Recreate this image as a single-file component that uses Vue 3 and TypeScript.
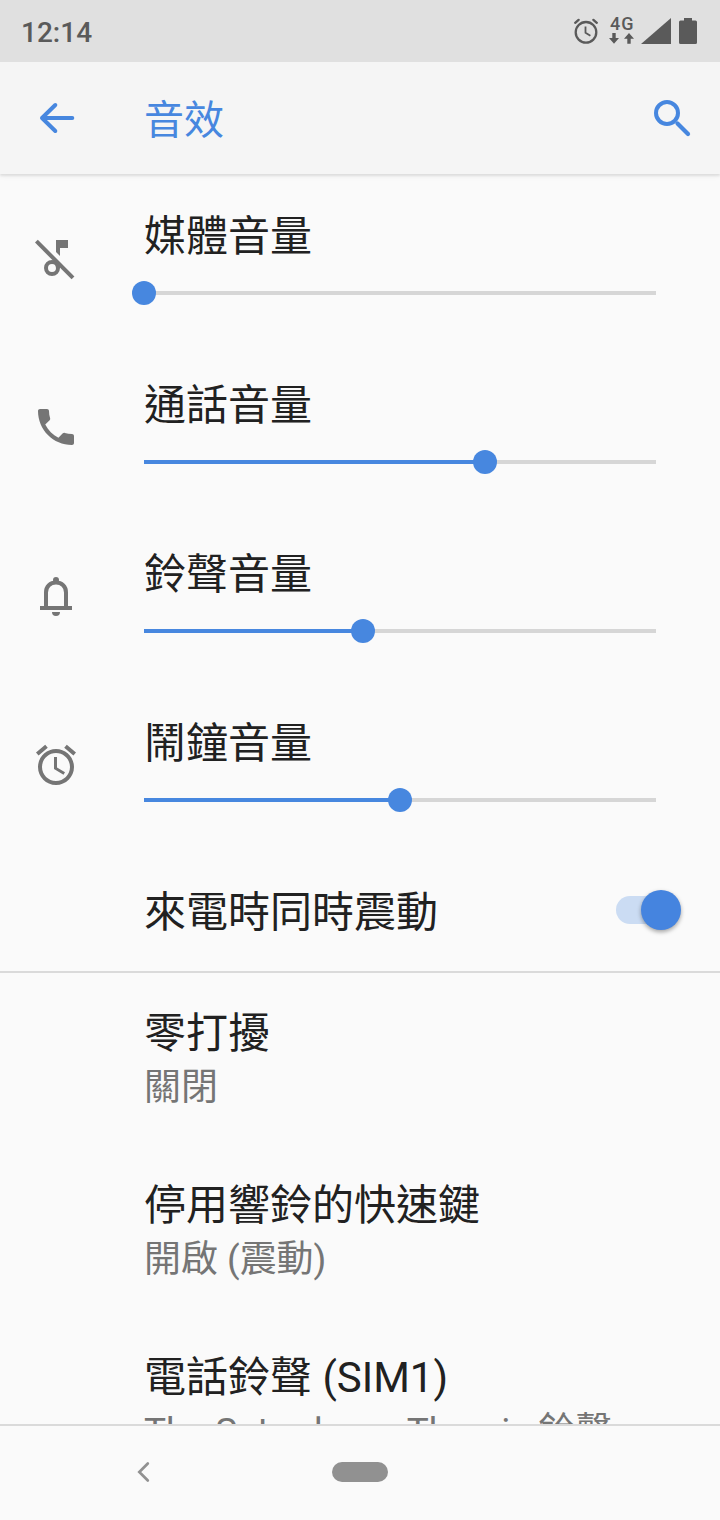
<script setup lang="ts">
type IconName = 'musicOff' | 'phone' | 'bell' | 'alarm'

interface Volume {
  icon: IconName
  label: string
  percent: number
}

interface Setting {
  title: string
  summary: string
}

const volumes: Volume[] = [
  { icon: 'musicOff', label: '媒體音量', percent: 0 },
  { icon: 'phone', label: '通話音量', percent: 66.65 },
  { icon: 'bell', label: '鈴聲音量', percent: 42.8 },
  { icon: 'alarm', label: '鬧鐘音量', percent: 50 },
]

const settings: Setting[] = [
  { title: '零打擾', summary: '關閉' },
  { title: '停用響鈴的快速鍵', summary: '開啟 (震動)' },
  { title: '電話鈴聲 (SIM1)', summary: 'The Saturdays - Themis 鈴聲' },
]

const alarmPath =
  'M22 5.72l-4.6-3.86-1.29 1.53 4.6 3.86L22 5.72zM7.88 3.39L6.6 1.86 2 5.71l1.29 1.53 4.59-3.85zM12.5 8H11v6l4.75 2.85.75-1.23-4-2.37V8zM12 4c-4.97 0-9 4.03-9 9s4.02 9 9 9c4.97 0 9-4.03 9-9s-4.03-9-9-9zm0 16c-3.87 0-7-3.13-7-7s3.13-7 7-7 7 3.13 7 7-3.13 7-7 7z'
</script>

<template>
  <div class="screen">
    <header class="status">
      <span class="clock">12:14</span>
      <div class="status-icons">
        <svg class="st-alarm" viewBox="0 0 26 28">
          <circle cx="13" cy="15.3" r="10.3" fill="none" stroke="#5a5a5a" stroke-width="2.300" />
          <path d="M2.200 5.800 5.600 2.900M23.800 5.800 20.400 2.900" stroke="#5a5a5a" stroke-width="2.400" stroke-linecap="round" />
          <path d="M12.500 9.500v6.200l4.900 3" fill="none" stroke="#5a5a5a" stroke-width="1.800" />
        </svg>
        <div class="network">
          <span class="network-label">4G</span>
          <svg class="arrows" viewBox="0 0 26 11">
            <path d="M4.300 0h3.400v5H11L6 10.800 1 5h3.300zM19.300 10.800h3.400v-5H26L21 0l-5 5.800h3.300z" fill="#5a5a5a" />
          </svg>
        </div>
        <svg class="signal" viewBox="0 0 30 26"><path d="M30 0v26H0z" fill="#5a5a5a" /></svg>
        <svg class="battery" viewBox="0 0 18 26">
          <path d="M5 0h8v2.500h3.500Q18 2.500 18 4v20.500Q18 26 16.500 26h-15Q0 26 0 24.500V4Q0 2.500 1.500 2.500H5z" fill="#5a5a5a" />
        </svg>
      </div>
    </header>

    <div class="appbar">
      <svg class="back" viewBox="0 0 40 40">
        <path d="M36.300 20H6M19.300 7 6 20l13.300 13" fill="none" stroke="#4787df" stroke-width="4" stroke-linecap="round" stroke-linejoin="round" />
      </svg>
      <h1>音效</h1>
      <svg class="search" viewBox="0 0 40 40">
        <circle cx="15" cy="15" r="11" fill="none" stroke="#4787df" stroke-width="4" />
        <path d="M25.500 25.500l10.500 10.500" stroke="#4787df" stroke-width="4.200" stroke-linecap="round" />
      </svg>
    </div>

    <main class="list">
      <section v-for="v in volumes" :key="v.label" class="volume">
        <div class="icon-cell">
          <svg class="icon" viewBox="0 0 24 24">
            <template v-if="v.icon === 'musicOff'">
              <circle cx="10" cy="17" r="3" fill="none" stroke="#757575" stroke-width="2" />
              <path d="M12 3h6v4h-4v4l-2-2zM11.500 12.800l2.500 2.500V17h-2z" fill="#757575" />
              <path d="M2.200 3.600 20.500 21.900" stroke="#757575" stroke-width="2" />
            </template>
            <path v-else-if="v.icon === 'phone'" fill="#757575" d="M6.620 10.790c1.440 2.830 3.760 5.140 6.590 6.590l2.200-2.200c.27-.27.67-.36 1.020-.24 1.120.37 2.330.57 3.570.57.55 0 1 .45 1 1V20c0 .55-.45 1-1 1-9.390 0-17-7.610-17-17 0-.55.45-1 1-1h3.500c.55 0 1 .45 1 1 0 1.250.2 2.450.57 3.570.11.35.03.74-.25 1.020l-2.200 2.200z" />
            <template v-else-if="v.icon === 'bell'">
              <circle cx="12" cy="4" r="1.500" fill="#757575" />
              <path d="M7 17.500v-7.300C7 7.200 9.100 5.300 12 5.300s5 1.900 5 4.900v7.300" fill="none" stroke="#757575" stroke-width="2" />
              <path d="M4 17h16v2H4zM10 20h4a2 2 0 0 1-4 0z" fill="#757575" />
            </template>
            <path v-else :d="alarmPath" fill="#757575" />
          </svg>
        </div>
        <div class="volume-body">
          <div class="title">{{ v.label }}</div>
          <div class="slider">
            <div class="fill" :style="{ width: v.percent + '%' }"></div>
            <div class="thumb" :style="{ left: v.percent + '%' }"></div>
          </div>
        </div>
      </section>

      <section class="vibrate">
        <div class="title">來電時同時震動</div>
        <div class="switch"><div class="knob"></div></div>
      </section>

      <section v-for="s in settings" :key="s.title" class="setting">
        <div class="title">{{ s.title }}</div>
        <div class="summary">{{ s.summary }}</div>
      </section>
    </main>

    <nav class="navbar">
      <svg class="nav-back" viewBox="0 0 16 24">
        <path d="M12.800 3.500 4.300 12l8.500 8.500" fill="none" stroke="#919191" stroke-width="2.700" stroke-linecap="round" />
      </svg>
      <div class="home"></div>
    </nav>
  </div>
</template>

<style>
body {
  margin: 0;
  background: #fafafa;
}
</style>

<style scoped>
.screen {
  width: 720px;
  height: 1520px;
  display: flex;
  flex-direction: column;
  overflow: hidden;
  background: #fafafa;
  color: #212121;
  font-family: Roboto, 'Noto Sans CJK TC', sans-serif;
}
.status {
  flex: none;
  height: 62px;
  box-sizing: border-box;
  padding: 0 23px 0 21px;
  display: flex;
  align-items: center;
  justify-content: space-between;
  background: #e0e0e0;
  color: #5a5a5a;
}
.clock {
  font-size: 28px;
  font-weight: 500;
  line-height: 32px;
  padding-top: 3px;
}
.status-icons {
  display: flex;
  align-items: flex-start;
  height: 28px;
}
.st-alarm {
  width: 26px;
  height: 28px;
  margin-right: 9px;
}
.network {
  width: 26px;
  height: 28px;
  margin-right: 7px;
}
.network-label {
  display: block;
  height: 16px;
  padding-left: 2px;
  font-size: 18px;
  font-weight: 500;
  line-height: 14px;
  letter-spacing: 1px;
}
.arrows {
  display: block;
  width: 26px;
  height: 11px;
}
.signal {
  width: 30px;
  height: 26px;
  margin: 1px 8px 0 0;
}
.battery {
  width: 18px;
  height: 26px;
  margin-top: 1px;
}
.appbar {
  flex: none;
  height: 112px;
  display: flex;
  align-items: center;
  background: #f5f5f5;
  box-shadow: 0 2px 2px rgba(0, 0, 0, 0.08), 0 2px 6px rgba(0, 0, 0, 0.06);
  clip-path: inset(0 0 -12px 0);
  z-index: 1;
}
.back {
  width: 40px;
  height: 40px;
  margin-left: 36px;
}
h1 {
  flex: 1;
  margin: 0 0 0 68px;
  padding-top: 5px;
  font-size: 40px;
  font-weight: 400;
  line-height: 56px;
  color: #4787df;
}
.search {
  width: 40px;
  height: 40px;
  margin-right: 28px;
}
.list {
  flex: 1;
  min-height: 0;
  overflow: hidden;
}
.volume {
  display: flex;
  height: 169px;
}
.icon-cell {
  width: 144px;
  padding: 60px 0 0 32px;
  box-sizing: border-box;
}
.icon {
  display: block;
  width: 48px;
  height: 48px;
}
.volume-body {
  width: 512px;
  padding-top: 35px;
}
.title {
  font-size: 42px;
  line-height: 56px;
  white-space: nowrap;
}
.slider {
  position: relative;
  height: 4px;
  margin-top: 26px;
  background: #d6d6d6;
}
.fill {
  height: 4px;
  background: #4787df;
}
.thumb {
  position: absolute;
  top: -10px;
  width: 24px;
  height: 24px;
  margin-left: -12px;
  border-radius: 50%;
  background: #4787df;
}
.vibrate {
  display: flex;
  justify-content: space-between;
  align-items: flex-start;
  height: 121px;
  box-sizing: content-box;
  padding: 0 39px 0 144px;
  border-bottom: 2px solid #dadada;
}
.vibrate .title {
  margin-top: 35px;
}
.switch {
  display: flex;
  justify-content: flex-end;
  align-items: center;
  width: 65px;
  height: 28px;
  margin-top: 46px;
  border-radius: 14px;
  background: linear-gradient(to right, #cbdcf3 50px, transparent 50px);
}
.knob {
  width: 40px;
  height: 40px;
  flex: none;
  border-radius: 50%;
  background: #4584df;
  box-shadow: 0 2px 4px rgba(0, 0, 0, 0.35);
}
.setting {
  height: 172px;
  padding: 33px 0 0 144px;
  box-sizing: border-box;
}
.summary {
  font-size: 36.95px;
  line-height: 52px;
  color: #757575;
  white-space: nowrap;
}
.navbar {
  flex: none;
  display: flex;
  align-items: flex-start;
  height: 94px;
  border-top: 2px solid #dadada;
  background: #fafafa;
}
.nav-back {
  width: 16px;
  height: 24px;
  margin: 34px 0 0 135px;
}
.home {
  width: 56px;
  height: 20px;
  margin: 36px 0 0 181px;
  border-radius: 10px;
  background: #919191;
}
</style>
